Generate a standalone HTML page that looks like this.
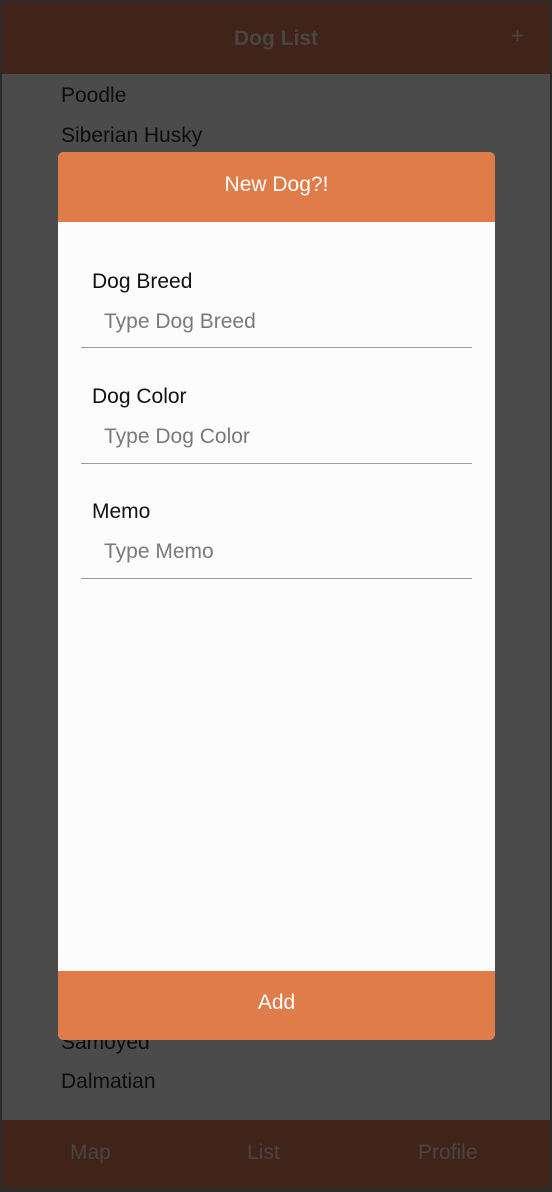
<!DOCTYPE html>
<html><head><style>
*{margin:0;padding:0;box-sizing:border-box}
body{width:552px;height:1192px;background:#2b2b2b;font-family:"Liberation Sans","Noto Sans CJK KR",sans-serif;position:relative;overflow:hidden}
.app{position:absolute;left:2px;top:2px;width:548px;height:1186px;background:#4b4b4b}
.hdr{position:absolute;left:0;top:0;width:548px;height:72px;background:#40241a}
.hdr .t{position:absolute;left:0;right:0;top:25px;text-align:center;font-size:21px;font-weight:bold;color:#4a4442}
.hdr .p{position:absolute;right:26px;top:21px;font-size:22px;color:#4a4442}
.li{position:absolute;left:59px;font-size:21px;color:#0d0d0d}
.ftr{position:absolute;left:0;top:1118px;width:548px;height:68px;background:#40241a}
.ftr span{position:absolute;top:21px;font-size:21px;color:#4a4442}
.modal{position:absolute;left:58px;top:152px;width:437px;height:888px;background:#fcfcfc;border-radius:6px;overflow:hidden}
.mh{height:70px;background:#e07c4a;color:#fff;text-align:center;font-size:21px;line-height:66px}
.mb{position:absolute;left:0;bottom:0;width:100%;height:69px;background:#e07c4a;color:#fff;text-align:center;font-size:21px;line-height:64px}
.lab{position:absolute;left:34px;font-size:21px;color:#111}
.ph{position:absolute;left:46px;font-size:21px;color:#7a7a7a}
.ln{position:absolute;left:23px;width:391px;height:1px;background:#9a9a9a}
</style></head><body>
<div class="app">
<div class="hdr"><div class="t">Dog List</div><div class="p">+</div></div>
<div class="li" style="top:82px">Poodle</div>
<div class="li" style="top:122px">Siberian Husky</div>
<div class="li" style="top:1029px">Samoyed</div>
<div class="li" style="top:1068px">Dalmatian</div>
<div class="ftr"><span style="left:68px">Map</span><span style="left:245px">List</span><span style="left:416px">Profile</span></div>
</div>
<div class="modal">
<div class="mh">New Dog?!</div>
<div class="lab" style="top:118px">Dog Breed</div>
<div class="ph" style="top:158px">Type Dog Breed</div>
<div class="ln" style="top:195px"></div>
<div class="lab" style="top:233px">Dog Color</div>
<div class="ph" style="top:273px">Type Dog Color</div>
<div class="ln" style="top:311px"></div>
<div class="lab" style="top:348px">Memo</div>
<div class="ph" style="top:388px">Type Memo</div>
<div class="ln" style="top:426px"></div>
<div class="mb">Add</div>
</div>
</body></html>
